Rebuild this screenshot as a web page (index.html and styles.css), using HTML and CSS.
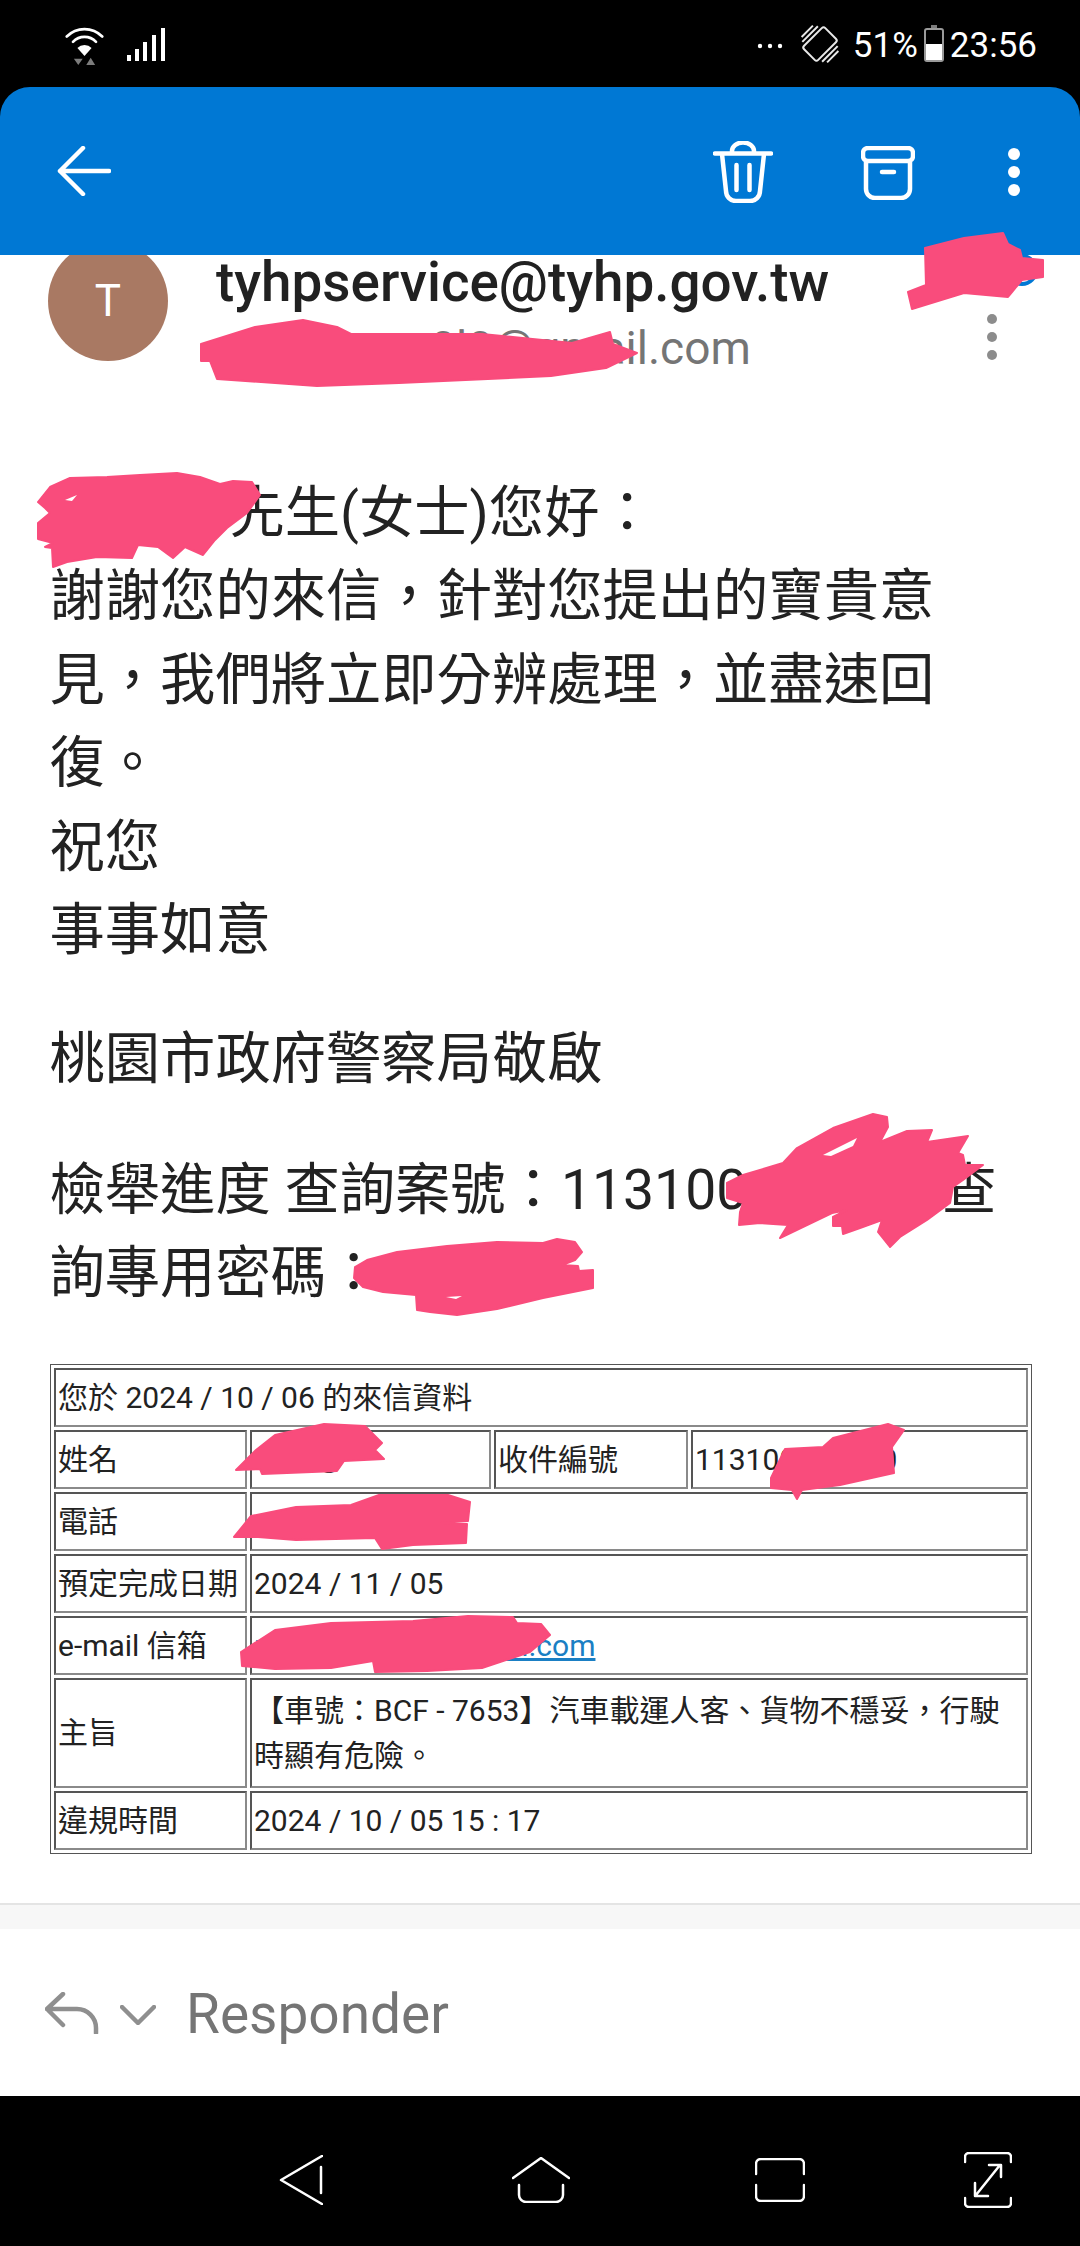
FILE: index.html
```html
<!DOCTYPE html>
<html lang="zh-Hant">
<head>
    <meta charset="UTF-8">
    <meta name="viewport" content="width=device-width, initial-scale=1.0">
    <title>Mail</title>
    <link rel="stylesheet" href="styles.css">
</head>
<body>
<div class="page">
    <div class="status-bar">
        <svg class="wifi" width="39" height="41" viewBox="0 0 44 46">
            <path class="line" d="M2 14 A28 28 0 0 1 42 14"/>
            <path class="line" d="M9 20 A18 18 0 0 1 35 20"/>
            <path class="solid" d="M14 27 A11 11 0 0 1 30 27 L22 36 Z"/>
            <path class="dim" d="M10 39 H20 L15 46 Z M29 38 L34 46 H24 Z"/>
        </svg>
        <svg class="signal" width="40" height="34" viewBox="0 0 40 34">
            <rect class="solid" x="1" y="27" width="4" height="6"/>
            <rect class="solid" x="9" y="21" width="4" height="12"/>
            <rect class="solid" x="17" y="14" width="4" height="19"/>
            <rect class="solid" x="26" y="7" width="4" height="26"/>
            <rect class="solid" x="35" y="0" width="4" height="33"/>
        </svg>
        <div class="status-right">
            <svg class="more" width="26" height="6" viewBox="0 0 26 6">
                <circle class="solid" cx="3" cy="3" r="2.2"/>
                <circle class="solid" cx="13" cy="3" r="2.2"/>
                <circle class="solid" cx="23" cy="3" r="2.2"/>
            </svg>
            <svg class="rotate" width="46" height="46" viewBox="0 0 46 46">
                <g transform="rotate(45 23 23)">
                    <rect class="thin" x="13" y="8" width="20" height="30" rx="2.5"/>
                    <path class="thin" d="M9 12 V34 M5 15 V31 M37 12 V34 M41 15 V31"/>
                </g>
            </svg>
            <span class="percent">51%</span>
            <svg class="battery" width="20" height="37" viewBox="0 0 20 37">
                <rect class="dim" x="7" y="0" width="6" height="3"/>
                <rect class="batt-shell" x="1" y="4" width="18" height="32" rx="2"/>
                <rect class="solid" x="2" y="19" width="16" height="16"/>
            </svg>
            <span class="clock">23:56</span>
        </div>
    </div>

    <div class="app-bar">
        <svg class="back" width="54" height="50" viewBox="0 0 54 50">
            <path class="line" d="M26 2 L3 25 L26 48 M3 25 H52"/>
        </svg>
        <svg class="trash" width="60" height="62" viewBox="0 0 60 62">
            <path class="line" d="M19 12 V10 A11 8.5 0 0 1 41 10 V12 M2 12.5 H58 M9 13 L13 50 A10 10 0 0 0 23 60 H37 A10 10 0 0 0 47 50 L51 13 M23.5 24 V49 M36.5 24 V49"/>
        </svg>
        <svg class="archive" width="54" height="54" viewBox="0 0 54 54">
            <rect class="line" x="2" y="2" width="50" height="13" rx="5"/>
            <path class="line" d="M5 16 V43 A9 9 0 0 0 14 52 H40 A9 9 0 0 0 49 43 V16 M21 26 H33"/>
        </svg>
        <svg class="menu" width="12" height="48" viewBox="0 0 12 48">
            <circle class="solid" cx="6" cy="6" r="6"/>
            <circle class="solid" cx="6" cy="24" r="6"/>
            <circle class="solid" cx="6" cy="42" r="6"/>
        </svg>
    </div>

    <div class="mail">
        <div class="sender">
            <div class="avatar">T</div>
            <div class="sender-text">
                <div class="sender-name">tyhpservice@tyhp.gov.tw</div>
                <div class="sender-to">recipient.n0l0@gmail.com</div>
            </div>
            <svg class="sender-menu" width="12" height="48" viewBox="0 0 12 48">
                <circle cx="6" cy="6" r="5"/>
                <circle cx="6" cy="24" r="5"/>
                <circle cx="6" cy="42" r="5"/>
            </svg>
        </div>

        <p class="para first"><span class="hidden-name"></span>先生(女士)您好：<br>謝謝您的來信，針對您提出的寶貴意<br>見，我們將立即分辨處理，並盡速回<br>復。<br>祝您<br>事事如意</p>
        <p class="para">桃園市政府警察局敬啟</p>
        <p class="para">檢舉進度 查詢案號：113100<span class="hidden-case"></span>查<br>詢專用密碼：</p>

        <table class="record">
            <colgroup>
                <col class="col-a"><col class="col-b"><col class="col-c"><col class="col-d">
            </colgroup>
            <tr><td colspan="4">您於 2024 / 10 / 06 的來信資料</td></tr>
            <tr><td>姓名</td><td class="masked-name">○○○</td><td>收件編號</td><td>113100000000</td></tr>
            <tr><td>電話</td><td colspan="3"></td></tr>
            <tr><td>預定完成日期</td><td colspan="3">2024 / 11 / 05</td></tr>
            <tr><td>e-mail 信箱</td><td colspan="3"><a class="mail-link" href="#">recipient.n00@gmail.com</a></td></tr>
            <tr class="tall"><td>主旨</td><td colspan="3">【車號：BCF - 7653】汽車載運人客、貨物不穩妥，行駛<br>時顯有危險。</td></tr>
            <tr><td>違規時間</td><td colspan="3">2024 / 10 / 05 15 : 17</td></tr>
        </table>

        <div class="band"></div>
    </div>

    <div class="reply-bar">
        <svg class="reply-icon" width="54" height="42" viewBox="0 0 54 42">
            <path d="M18 2 L2 17 L18 33 M2 17 H32 A19 19 0 0 1 51 36 V41"/>
        </svg>
        <svg class="reply-chevron" width="36" height="20" viewBox="0 0 36 20">
            <path d="M2 2 L18 18 L34 2"/>
        </svg>
        <span class="reply-label">Responder</span>
    </div>

    <div class="nav-bar">
        <svg class="nav-back" width="44" height="50" viewBox="0 0 44 50">
            <path class="nav-line" d="M43 1 L2 25 L43 49 M42 12 V38"/>
        </svg>
        <svg class="nav-home" width="58" height="46" viewBox="0 0 58 46">
            <path class="nav-line" d="M1 21 L29 1 L57 21 M7 28 V38 A7 7 0 0 0 14 45 H44 A7 7 0 0 0 51 38 V28"/>
        </svg>
        <svg class="nav-recent" width="50" height="44" viewBox="0 0 50 44">
            <path class="nav-line" d="M1 16 V6 A5 5 0 0 1 6 1 H44 A5 5 0 0 1 49 6 V16 M1 27 V38 A5 5 0 0 0 6 43 H44 A5 5 0 0 0 49 38 V27"/>
        </svg>
        <svg class="nav-fit" width="48" height="56" viewBox="0 0 48 56">
            <path class="nav-line" d="M1 10 V5 A4 4 0 0 1 5 1 H43 A4 4 0 0 1 47 5 V10 M1 46 V51 A4 4 0 0 0 5 55 H43 A4 4 0 0 0 47 51 V46 M36 13 L12 43 M25 13 H37 V25 M11 31 V44 H24"/>
        </svg>
    </div>

    <!-- redaction strokes drawn over the screenshot -->
    <svg class="scribbles" width="1080" height="2246" viewBox="0 0 1080 2246">
        <circle class="blue-ring" cx="1022" cy="270" r="14"/>
        <polygon points="925,248 964,238 1003,233 1008,244 1020,250 1022,258 1043,260 1043,277 1022,280 1012,292 1008,297 964,293 912,309 908,292 926,285"/>
        <polygon points="201,344 255,327 303,320 337,327 351,334 482,334 572,343 610,332 613,344 637,353 606,368 551,376 399,383 317,386 217,379 210,361 201,361"/>
        <polygon points="38,502 50,487 70,478 107,477 140,475 177,473 200,477 220,484 233,481 252,482 260,495 247,513 227,528 215,540 203,555 185,547 173,558 158,547 138,545 132,558 97,557 67,562 53,567 52,548 45,547 53,543 38,539 38,523 50,513 45,508"/>
        <polygon points="727,1183 743,1175 783,1163 797,1148 833,1128 873,1114 887,1117 888,1127 880,1142 907,1131 932,1130 927,1142 968,1136 958,1153 963,1155 965,1165 983,1165 963,1180 953,1187 950,1203 927,1220 900,1237 890,1247 878,1232 882,1220 860,1228 843,1234 842,1226 833,1226 833,1217 847,1210 832,1213 780,1238 788,1225 760,1223 739,1225 740,1212 743,1203 727,1198"/>
        <polygon points="355,1267 367,1260 397,1252 447,1246 497,1242 543,1243 557,1239 575,1242 582,1252 575,1260 562,1265 578,1266 579,1271 593,1270 593,1288 543,1298 497,1309 457,1315 430,1312 417,1310 416,1295 383,1292 363,1287 354,1278"/>
        <polygon points="236,1470 256,1450 275,1435 324,1424 365,1426 382,1443 375,1450 384,1459 344,1461 337,1471 262,1474 260,1469"/>
        <polygon points="771,1478 785,1449 823,1447 833,1438 888,1424 904,1430 892,1447 894,1473 840,1485 802,1490 797,1499 792,1490 771,1488"/>
        <polygon points="234,1537 251,1516 296,1507 351,1505 379,1495 448,1495 470,1502 468,1521 441,1523 467,1524 466,1543 413,1545 382,1549 375,1538 296,1540 258,1537"/>
        <polygon points="242,1666 241,1652 275,1630 331,1623 413,1621 468,1616 513,1617 517,1623 541,1624 550,1635 530,1652 482,1668 427,1671 375,1672 373,1661 331,1668 275,1669"/>
        <polygon class="gap" points="823,1155 857,1138 853,1146 831,1156"/>
        <polygon class="gap" points="65,500 77,495 72,501"/>
        <polygon class="gap" points="446,1297 462,1296 456,1299"/>
    </svg>
</div>
</body>
</html>
```
FILE: styles.css
```css
* {
    box-sizing: border-box;
}

body {
    margin: 0;
    background: #000;
    font-family: Roboto, "Noto Sans CJK TC", sans-serif;
}

.page {
    position: relative;
    width: 1080px;
    height: 2246px;
    overflow: hidden;
    display: flex;
    flex-direction: column;
    background: #000;
}

svg {
    display: block;
    flex-shrink: 0;
}

.line {
    fill: none;
    stroke: #fff;
    stroke-width: 4.5;
    stroke-linecap: round;
    stroke-linejoin: round;
}

.thin {
    fill: none;
    stroke: #e8e8e8;
    stroke-width: 2;
}

.solid {
    fill: #fff;
}

.dim {
    fill: #7c7c7c;
}

/* Status bar */
.status-bar {
    height: 87px;
    flex-shrink: 0;
    display: flex;
    align-items: center;
    padding: 0 43px 0 65px;
    color: #fff;
}

.wifi {
    margin-top: 1px;
}

.wifi .line {
    stroke-width: 3;
}

.signal {
    margin-left: 22px;
    margin-top: 2px;
}

.status-right {
    margin-left: auto;
    display: flex;
    align-items: center;
    font-size: 35px;
}

.percent,
.clock {
    margin-top: 4px;
}

.more {
    margin-top: 4px;
}

.rotate {
    margin: 0 10px 0 14px;
}

.battery {
    margin: 0 6px 0 6px;
}

.batt-shell {
    fill: none;
    stroke: #9a9a9a;
    stroke-width: 2;
}

/* App bar */
.app-bar {
    position: relative;
    z-index: 2;
    height: 168px;
    flex-shrink: 0;
    display: flex;
    align-items: center;
    padding-left: 57px;
    background: #0078d4;
    border-radius: 30px 30px 0 0;
}

.back {
    margin-top: -1px;
}

.trash {
    margin-left: auto;
    margin-top: 1px;
}

.archive {
    margin-left: 88px;
    margin-top: 3px;
}

.menu {
    margin: 1px 60px 0 93px;
}

/* Mail content */
.mail {
    flex: 1;
    min-height: 0;
    background: #fff;
}

.sender {
    display: flex;
    padding-left: 48px;
}

.avatar {
    width: 120px;
    height: 120px;
    flex-shrink: 0;
    margin-top: -14px;
    border-radius: 50%;
    background: #a97963;
    color: #fff;
    font-size: 44px;
    line-height: 120px;
    text-align: center;
}

.sender-text {
    flex: 1;
    margin-left: 48px;
}

.sender-name {
    font-size: 54.8px;
    font-weight: 500;
    line-height: 54px;
    color: #212121;
}

.sender-to {
    margin-top: 6px;
    font-size: 46px;
    line-height: 66px;
    color: #757575;
}

.sender-menu {
    margin: 58px 82px 0 0;
    fill: #8c8c8c;
}

.para {
    margin: 47px 0 0;
    padding-left: 49.5px;
    font-size: 55.3px;
    line-height: 83.4px;
    color: #222;
}

.para.first {
    margin-top: 91px;
}

.para.first + .para {
    margin-top: 46px;
}

.hidden-name {
    display: inline-block;
    width: 180px;
}

.hidden-case {
    display: inline-block;
    width: 194px;
}

/* Record table */
.record {
    width: 982px;
    margin: 48px 0 0 50px;
    table-layout: fixed;
    border-collapse: separate;
    border-spacing: 3px;
    border: 1px solid #555;
    font-size: 30px;
    line-height: 45px;
    color: #222;
}

.col-a {
    width: 193px;
}

.col-b {
    width: 241px;
}

.col-c {
    width: 194px;
}

.col-d {
    width: 337px;
}

.record td {
    height: 59px;
    padding: 0 2px;
    border: 2px solid #8a8a8a;
    border-top-color: #555;
    border-left-color: #555;
    white-space: nowrap;
}

.record .tall td {
    height: 110px;
}

.mail-link {
    color: #1a7fc4;
}

.band {
    height: 28px;
    margin-top: 49px;
    background: #f7f7f7;
    border-top: 2px solid #e4e4e4;
    border-bottom: 2px solid #e4e4e4;
}

/* Reply bar */
.reply-bar {
    height: 167px;
    flex-shrink: 0;
    display: flex;
    align-items: center;
    padding-left: 45px;
    background: #fff;
}

.reply-icon,
.reply-chevron {
    fill: none;
    stroke: #8f8f8f;
    stroke-width: 4.5;
    stroke-linecap: round;
    stroke-linejoin: round;
}

.reply-chevron {
    margin: 5px 30px 0 21px;
}

.reply-label {
    margin-top: 3px;
    font-size: 55px;
    color: #757575;
}

/* Navigation bar */
.nav-bar {
    height: 150px;
    flex-shrink: 0;
    display: flex;
    align-items: center;
    padding-left: 279px;
    background: #000;
}

.nav-line {
    fill: none;
    stroke: #fff;
    stroke-width: 2.5;
    stroke-linecap: round;
    stroke-linejoin: round;
}

.nav-back {
    margin-top: 18px;
}

.nav-home {
    margin: 18px 0 0 189px;
}

.nav-recent {
    margin: 18px 0 0 185px;
}

.nav-fit {
    margin: 18px 0 0 159px;
}

.scribbles {
    position: absolute;
    top: 0;
    left: 0;
    z-index: 3;
    fill: #f94c7c;
    stroke: #f94c7c;
    stroke-width: 2;
    stroke-linejoin: round;
}

.scribbles .blue-ring {
    fill: none;
    stroke: #0078d4;
    stroke-width: 4;
}

.scribbles .gap {
    fill: #fff;
    stroke: none;
}
```
